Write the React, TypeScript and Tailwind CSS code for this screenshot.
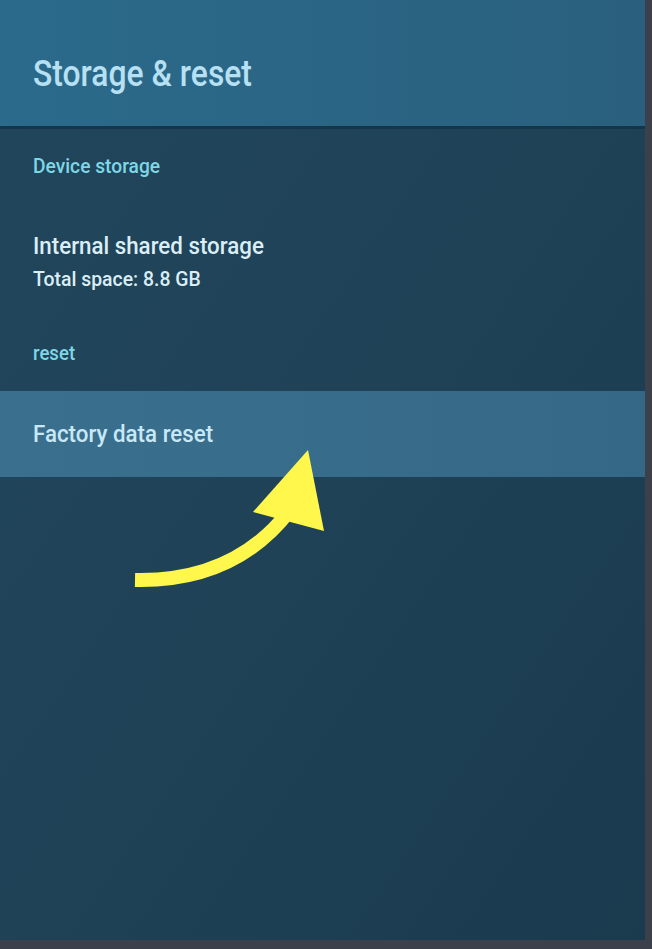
export default function App() {
  return (
    <div
      className="w-[652px] h-[949px] bg-[#3c404b] overflow-hidden"
      style={{ fontFamily: "Roboto, 'Noto Sans', sans-serif" }}
    >
      <div className="relative w-[645px] h-[940px] flex flex-col bg-gradient-to-br from-[#21465c] via-[#1f4257] to-[#1a3a4e]">
        <header className="h-[129px] shrink-0 flex items-end pb-[34px] pl-[33px] bg-gradient-to-r from-[#2b6a8b] to-[#2a607e] border-b-[3px] border-[#173548]">
          <h1 className="text-[36px] leading-none font-medium text-[#b7e0f3] scale-x-[0.885] origin-left whitespace-nowrap">
            Storage &amp; reset
          </h1>
        </header>

        <div className="pt-[27px] pl-[33px]">
          <p className="text-[20px] leading-none font-medium text-[#7dd7e6] scale-x-[0.96] origin-left whitespace-nowrap">
            Device storage
          </p>
        </div>

        <div className="pt-[58px] pl-[33px] flex flex-col gap-[11px]">
          <p className="text-[24px] leading-none font-medium text-[#dbeef6] scale-x-[0.93] origin-left whitespace-nowrap">
            Internal shared storage
          </p>
          <p className="text-[20px] leading-none font-medium text-[#dbeef6] scale-x-[0.97] origin-left whitespace-nowrap">
            Total space: 8.8 GB
          </p>
        </div>

        <div className="pt-[54px] pl-[33px]">
          <p className="text-[20px] leading-none font-medium text-[#7dd7e6] scale-x-[0.93] origin-left whitespace-nowrap">
            reset
          </p>
        </div>

        <div className="mt-[28px] h-[86px] flex items-center pl-[33px] bg-gradient-to-r from-[#3a708e] to-[#346886]">
          <p className="text-[24px] leading-none font-medium text-[#c9e8f6] scale-x-[0.93] origin-left whitespace-nowrap">
            Factory data reset
          </p>
        </div>

        <svg
          className="absolute left-0 top-0 pointer-events-none"
          width="645"
          height="940"
          viewBox="0 0 645 940"
        >
          <path
            d="M135 580 Q 235 582 290 510"
            fill="none"
            stroke="#fff74c"
            strokeWidth="14"
          />
          <polygon points="308,450 253,512 324,531" fill="#fff74c" />
        </svg>
      </div>
    </div>
  );
}
